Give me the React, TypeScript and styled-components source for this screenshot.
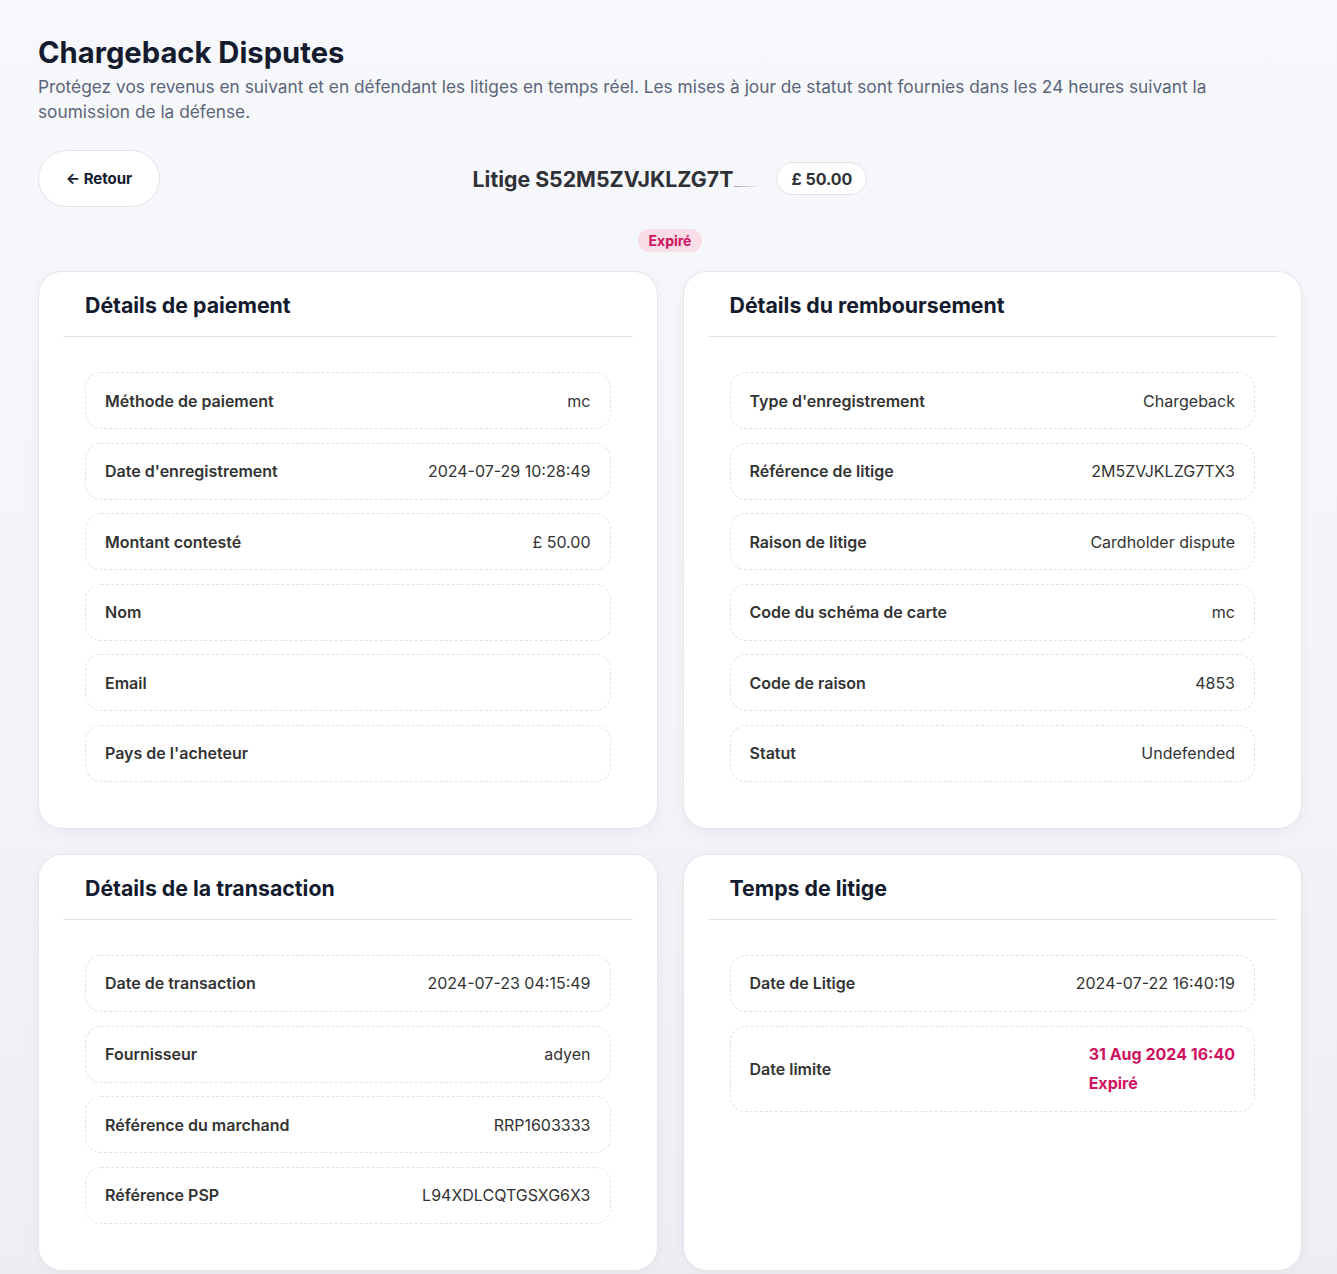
import styled, { createGlobalStyle } from 'styled-components';

const GlobalStyle = createGlobalStyle`
  * { box-sizing: border-box; }
  html, body {
    margin: 0;
    padding: 0;
  }
  body {
    font-family: Inter, 'Noto Sans', sans-serif;
    background: linear-gradient(180deg, #f7f8fb 0%, #f3f4f8 60%, #eceef3 100%);
    min-height: 1274px;
    color: #111827;
  }
`;

const Page = styled.main`
  padding: 36px 35px 0 38px;
`;

const Title = styled.h1`
  margin: 0;
  font-size: 29.2px;
  line-height: 34px;
  font-weight: 700;
  color: #141b2e;
`;

const Subtitle = styled.p`
  margin: 4px 0 0;
  font-size: 17.3px;
  line-height: 25px;
  color: #5b6579;
  max-width: 1220px;
`;

const TopBar = styled.div`
  display: grid;
  grid-template-columns: 1fr auto 1fr;
  align-items: center;
  margin-top: 26px;
`;

const BackButton = styled.button`
  justify-self: start;
  height: 57px;
  width: 122px;
  border-radius: 999px;
  border: 1px solid #e1e3e8;
  background: #ffffff;
  font-family: inherit;
  font-size: 15px;
  font-weight: 700;
  color: #141b2e;
  cursor: pointer;
`;

const DisputeTitle = styled.div`
  display: flex;
  align-items: center;
  gap: 16px;
`;

const DisputeId = styled.h2`
  margin: 0;
  font-size: 21.3px;
  font-weight: 700;
  color: #2f3136;
  display: flex;
  align-items: baseline;
`;

const Fade = styled.span`
  display: inline-block;
  width: 26px;
  height: 1px;
  margin-left: 1px;
  background: linear-gradient(90deg, #9ca0a8 0%, rgba(200, 203, 210, 0) 100%);
`;

const AmountPill = styled.span`
  display: inline-flex;
  align-items: center;
  height: 33px;
  padding: 0 14px;
  border-radius: 999px;
  border: 1px solid #e1e3e8;
  background: #ffffff;
  font-size: 16px;
  font-weight: 700;
  color: #2f3136;
`;

const StatusRow = styled.div`
  display: flex;
  justify-content: center;
  margin-top: 22px;
`;

const StatusBadge = styled.span`
  display: inline-flex;
  align-items: center;
  height: 23px;
  padding: 0 11px;
  border-radius: 999px;
  background: #f9dde6;
  color: #cf1260;
  font-size: 14px;
  font-weight: 700;
`;

const Grid = styled.div`
  display: grid;
  grid-template-columns: 1fr 1fr;
  gap: 25px;
  margin-top: 19px;
`;

const Card = styled.section`
  background: #ffffff;
  border: 1px solid #e4e6eb;
  border-radius: 24px;
  padding: 19px 24px 24px;
  box-shadow: 0 4px 14px rgba(20, 27, 46, 0.04);
`;

const CardHeader = styled.h3`
  margin: 0;
  padding: 0 22px 17px;
  font-size: 21.3px;
  line-height: 28px;
  font-weight: 700;
  color: #141b2e;
  border-bottom: 1px solid #e3e5ea;
`;

const RowList = styled.div`
  display: flex;
  flex-direction: column;
  gap: 13.6px;
  padding: 35px 22px 22px;
`;

const Row = styled.div`
  display: flex;
  align-items: center;
  justify-content: space-between;
  padding: 15.5px 19px;
  border: 1px dashed #e0e2e7;
  border-radius: 16px;
  min-height: 57px;
`;

const Label = styled.span`
  font-size: 16px;
  line-height: 24px;
  font-weight: 600;
  color: #333;
`;

const Value = styled.span<{ $alert?: boolean }>`
  font-size: 16px;
  line-height: 24px;
  font-weight: ${(p) => (p.$alert ? 700 : 400)};
  color: ${(p) => (p.$alert ? '#cf1260' : '#333')};
`;

const ValueStack = styled.div`
  display: flex;
  flex-direction: column;
  gap: 5px;
`;

type Item = { label: string; value?: string };

const payment: Item[] = [
  { label: 'Méthode de paiement', value: 'mc' },
  { label: "Date d'enregistrement", value: '2024-07-29 10:28:49' },
  { label: 'Montant contesté', value: '£ 50.00' },
  { label: 'Nom' },
  { label: 'Email' },
  { label: "Pays de l'acheteur" },
];

const refund: Item[] = [
  { label: "Type d'enregistrement", value: 'Chargeback' },
  { label: 'Référence de litige', value: '2M5ZVJKLZG7TX3' },
  { label: 'Raison de litige', value: 'Cardholder dispute' },
  { label: 'Code du schéma de carte', value: 'mc' },
  { label: 'Code de raison', value: '4853' },
  { label: 'Statut', value: 'Undefended' },
];

const transaction: Item[] = [
  { label: 'Date de transaction', value: '2024-07-23 04:15:49' },
  { label: 'Fournisseur', value: 'adyen' },
  { label: 'Référence du marchand', value: 'RRP1603333' },
  { label: 'Référence PSP', value: 'L94XDLCQTGSXG6X3' },
];

function DetailCard({ title, items, children }: { title: string; items: Item[]; children?: React.ReactNode }) {
  return (
    <Card>
      <CardHeader>{title}</CardHeader>
      <RowList>
        {items.map((item) => (
          <Row key={item.label}>
            <Label>{item.label}</Label>
            <Value>{item.value}</Value>
          </Row>
        ))}
        {children}
      </RowList>
    </Card>
  );
}

export default function App() {
  return (
    <>
      <GlobalStyle />
      <Page>
        <Title>Chargeback Disputes</Title>
        <Subtitle>
          Protégez vos revenus en suivant et en défendant les litiges en temps réel. Les mises à jour de statut sont
          fournies dans les 24 heures suivant la soumission de la défense.
        </Subtitle>

        <TopBar>
          <BackButton>← Retour</BackButton>
          <DisputeTitle>
            <DisputeId>
              Litige S52M5ZVJKLZG7T
              <Fade />
            </DisputeId>
            <AmountPill>£ 50.00</AmountPill>
          </DisputeTitle>
          <span />
        </TopBar>

        <StatusRow>
          <StatusBadge>Expiré</StatusBadge>
        </StatusRow>

        <Grid>
          <DetailCard title="Détails de paiement" items={payment} />
          <DetailCard title="Détails du remboursement" items={refund} />
          <DetailCard title="Détails de la transaction" items={transaction} />
          <DetailCard title="Temps de litige" items={[{ label: 'Date de Litige', value: '2024-07-22 16:40:19' }]}>
            <Row>
              <Label>Date limite</Label>
              <ValueStack>
                <Value $alert>31 Aug 2024 16:40</Value>
                <Value $alert>Expiré</Value>
              </ValueStack>
            </Row>
          </DetailCard>
        </Grid>
      </Page>
    </>
  );
}
